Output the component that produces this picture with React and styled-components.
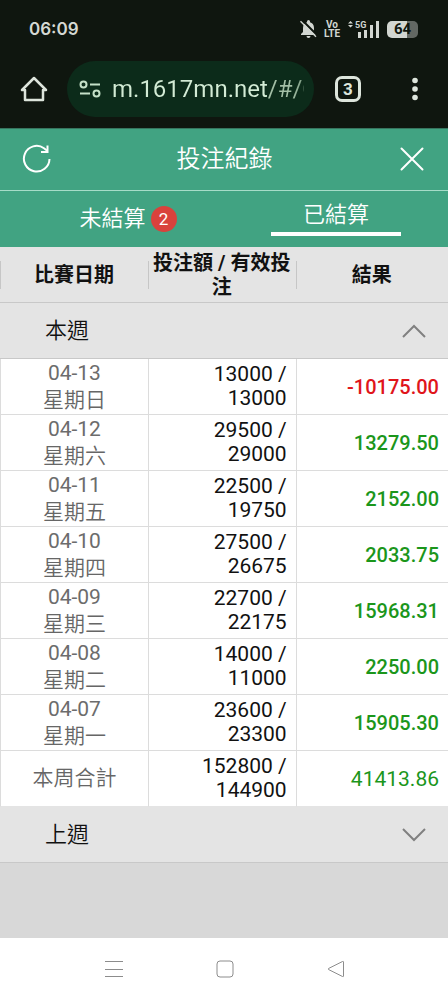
import React, { useState } from "react";
import styled, { createGlobalStyle } from "styled-components";

const GlobalStyle = createGlobalStyle`
  * {
    box-sizing: border-box;
  }
  body {
    margin: 0;
    background: #d8d8d8;
    font-family: Roboto, "Noto Sans CJK TC", sans-serif;
    color: #111;
  }
  button {
    border: none;
    background: none;
    padding: 0;
    font: inherit;
    color: inherit;
    cursor: pointer;
  }
  svg {
    display: block;
  }
`;

const Page = styled.div`
  min-height: 100vh;
  display: flex;
  flex-direction: column;
`;

const BrowserTop = styled.div`
  background: #0f160f;
  color: #dde5dc;
`;

const StatusBar = styled.div`
  height: 58px;
  padding: 0 30px 0 29px;
  display: flex;
  align-items: center;
  justify-content: space-between;
`;

const Clock = styled.span`
  font-family: Inter, sans-serif;
  font-size: 17px;
  font-weight: 600;
  color: #d5d9d4;
`;

const StatusIcons = styled.div`
  display: flex;
  align-items: center;
  color: #d2d6d1;
`;

const Volte = styled.span`
  width: 18px;
  margin: 0 7px 0 6px;
  font-size: 10px;
  line-height: 9px;
  font-weight: 700;
  text-align: center;
`;

const Battery = styled.span`
  width: 31px;
  height: 17px;
  margin-left: 7px;
  border-radius: 5px;
  background: linear-gradient(to right, #d2d6d1 64%, #636863 64%);
  color: #0f160f;
  font-size: 15px;
  line-height: 17px;
  font-weight: 700;
  text-align: center;
`;

const AddressRow = styled.div`
  height: 70px;
  padding: 3px 22px 11px 20px;
  display: flex;
  align-items: center;
`;

const AddressBar = styled.label`
  flex: 1;
  min-width: 0;
  height: 56px;
  margin: 0 21px 0 19px;
  padding: 0 10px 0 12px;
  border-radius: 28px;
  background: #0c2b1a;
  display: flex;
  align-items: center;
  gap: 11px;
`;

const AddressInput = styled.input`
  flex: 1;
  min-width: 0;
  height: 40px;
  padding: 0;
  border: none;
  outline: none;
  font-family: Roboto, sans-serif;
  font-size: 24px;
  color: transparent;
  background: linear-gradient(to right, #d3ebd5 155px, #a3bfa6 155px 180px, #7c9a82);
  background-clip: text;
  -webkit-background-clip: text;
`;

const TabCount = styled.button`
  width: 26px;
  height: 26px;
  border: 3px solid #dde5dc;
  border-radius: 7px;
  font-size: 17px;
  line-height: 20px;
  font-weight: 700;
`;

const MoreButton = styled.button`
  width: 20px;
  margin-left: 45px;
`;

const TitleBar = styled.header`
  height: 63px;
  padding: 0 21px 2px 22px;
  background: #41a382;
  border-top: 1px solid #37755f;
  border-bottom: 1px solid #a6dcc8;
  display: flex;
  align-items: center;
  justify-content: space-between;
  color: #fff;
`;

const Title = styled.h1`
  margin: 0;
  font-size: 24px;
  line-height: 32px;
  font-weight: 350;
`;

const Tabs = styled.nav`
  height: 56px;
  padding: 0 8px 0 24px;
  background: #41a382;
  display: flex;
  color: #fff;
`;

const Tab = styled.button`
  flex: 1;
  display: flex;
  flex-direction: column;
  align-items: center;
  padding-top: ${(props) => (props.$active ? 8 : 12)}px;
  font-size: 22px;
  line-height: 32px;
  font-weight: 350;

  &::after {
    content: "";
    width: 130px;
    height: 4px;
    margin-top: 1px;
    background: ${(props) => (props.$active ? "#fff" : "transparent")};
  }
`;

const TabLabel = styled.span`
  display: flex;
  align-items: center;
  gap: 5px;
`;

const Badge = styled.span`
  width: 26px;
  height: 26px;
  border-radius: 50%;
  background: #d9423c;
  font-size: 17px;
  line-height: 26px;
  font-weight: 400;
  text-align: center;
`;

const RecordTable = styled.table`
  width: 100%;
  table-layout: fixed;
  border-collapse: separate;
  border-spacing: 0;
`;

const Column = styled.col`
  width: ${(props) => props.$width};
`;

const HeadCell = styled.th`
  height: 56px;
  padding: 0 4px;
  background: #e4e4e4 linear-gradient(#c6c6c6, #c6c6c6) left center / 1px 28px no-repeat;
  border-bottom: 1px solid #c8c8c8;
  font-size: 20px;
  line-height: 24px;
  font-weight: 700;
`;

const WeekCell = styled.th`
  padding: 0;
  background: #e4e4e4;
  border-bottom: 1px solid #c8c8c8;
`;

const WeekButton = styled.button`
  width: 100%;
  height: 55px;
  padding: 0 21px 0 45px;
  display: flex;
  align-items: center;
  justify-content: space-between;
  font-size: 22px;
  line-height: 32px;
  font-weight: 350;
`;

const Cell = styled.td`
  height: 56px;
  padding: 0;
  background: #fff;
  border-left: 1px solid #dcdcdc;
  border-bottom: 1px solid ${(props) => (props.$last ? "#e4e4e4" : "#dcdcdc")};
`;

const DateCell = styled(Cell)`
  font-size: 21px;
  line-height: 27px;
  font-weight: 350;
  text-align: center;
  color: #666;

  span {
    display: block;
    font-weight: 400;
    color: #6c6c6c;
  }
`;

const AmountCell = styled(Cell)`
  padding: 0 9px 2px 40px;
  font-size: 21px;
  line-height: 24px;
  text-align: right;
`;

const ResultCell = styled(Cell)`
  padding-right: 9px;
  font-size: ${(props) => (props.$last ? 21 : 20)}px;
  line-height: 24px;
  font-weight: ${(props) => (props.$last ? 400 : 500)};
  text-align: right;
  color: ${(props) => (props.$loss ? "#e0151b" : "#1b961b")};
`;

const SystemNav = styled.nav`
  height: 62px;
  margin-top: auto;
  padding: 0 56px 0 58px;
  background: #fff;
  display: flex;
`;

const SystemButton = styled.button`
  flex: 1;
  display: flex;
  align-items: center;
  justify-content: center;
`;

const days = [
  { date: "04-13", day: "星期日", bet: 13000, valid: 13000, result: "-10175.00" },
  { date: "04-12", day: "星期六", bet: 29500, valid: 29000, result: "13279.50" },
  { date: "04-11", day: "星期五", bet: 22500, valid: 19750, result: "2152.00" },
  { date: "04-10", day: "星期四", bet: 27500, valid: 26675, result: "2033.75" },
  { date: "04-09", day: "星期三", bet: 22700, valid: 22175, result: "15968.31" },
  { date: "04-08", day: "星期二", bet: 14000, valid: 11000, result: "2250.00" },
  { date: "04-07", day: "星期一", bet: 23600, valid: 23300, result: "15905.30" },
];

function Chevron({ up }) {
  return (
    <svg width="26" height="16" viewBox="0 0 26 16" fill="none" stroke="#808080" strokeWidth="2">
      <path d={up ? "M2 14 13 3l11 11" : "M2 2l11 11L24 2"} />
    </svg>
  );
}

function PhoneStatus() {
  return (
    <StatusBar>
      <Clock>06:09</Clock>
      <StatusIcons>
        <svg width="17" height="18" viewBox="0 0 17 18">
          <path d="M1 15v-1l2-2V8C3 4.800 4.800 2.800 7 2.300V1.500a1.500 1.500 0 0 1 3 0v.8C12.200 2.800 14 4.800 14 8v4l2 2v1zM6.500 16h4a2 2 0 0 1-4 0z" fill="currentColor" />
          <path d="M2 0 17.500 15.500" stroke="#0f160f" strokeWidth="2" />
          <path d="M.5 1.200 16 16.700" stroke="currentColor" strokeWidth="1.500" />
        </svg>
        <Volte>
          Vo
          <br />
          LTE
        </Volte>
        <svg width="32" height="18" viewBox="0 0 32 18" fill="currentColor">
          <path d="M0 3.500 2.500 1 5 3.500zM0 5h5L2.500 7.500z" />
          <text x="7" y="8" fontSize="9" fontWeight="700" fontFamily="Roboto, sans-serif">
            5G
          </text>
          <path d="M10 12h3v6h-3zM16 10h3v8h-3zM22 5h3v13h-3zM28 1h3v17h-3z" />
        </svg>
        <Battery>64</Battery>
      </StatusIcons>
    </StatusBar>
  );
}

function BrowserBar() {
  return (
    <AddressRow>
      <button aria-label="Home">
        <svg width="28" height="28" viewBox="0 0 28 28" fill="none" stroke="currentColor" strokeWidth="2.500" strokeLinejoin="round">
          <path d="M2 15h3v10h18V15h3L14 3z" />
        </svg>
      </button>
      <AddressBar>
        <svg width="22" height="18" viewBox="0 0 22 18" fill="none" stroke="#c5e0c8" strokeWidth="2">
          <circle cx="4.500" cy="4.500" r="3" />
          <path d="M11 4.500h10M1 13.500h10" />
          <circle cx="17.500" cy="13.500" r="3" />
        </svg>
        <AddressInput aria-label="Address" defaultValue="m.1617mn.net/#/C" />
      </AddressBar>
      <TabCount aria-label="Open tabs">3</TabCount>
      <MoreButton aria-label="More">
        <svg width="20" height="26" viewBox="0 0 20 26" fill="currentColor">
          <circle cx="9" cy="4.500" r="2.800" />
          <circle cx="9" cy="13" r="2.800" />
          <circle cx="9" cy="21.500" r="2.800" />
        </svg>
      </MoreButton>
    </AddressRow>
  );
}

export default function App() {
  const [tab, setTab] = useState("settled");
  const [open, setOpen] = useState(true);

  return (
    <Page>
      <GlobalStyle />
      <BrowserTop>
        <PhoneStatus />
        <BrowserBar />
      </BrowserTop>
      <TitleBar>
        <button aria-label="Refresh">
          <svg width="30" height="30" viewBox="0 0 30 30" fill="none" stroke="currentColor" strokeWidth="2">
            <path d="M27.500 15A12.800 12.800 0 1 1 22 4.200L25.500 7" />
            <path d="M25.500 1.500v6.500H19" />
          </svg>
        </button>
        <Title>投注紀錄</Title>
        <button aria-label="Close">
          <svg width="30" height="30" viewBox="0 0 30 30" fill="none" stroke="currentColor" strokeWidth="2" strokeLinecap="round">
            <path d="M4.500 4.500l21 21M25.500 4.500l-21 21" />
          </svg>
        </button>
      </TitleBar>
      <Tabs>
        <Tab $active={tab === "open"} onClick={() => setTab("open")}>
          <TabLabel>
            未結算 <Badge>2</Badge>
          </TabLabel>
        </Tab>
        <Tab $active={tab === "settled"} onClick={() => setTab("settled")}>
          <TabLabel>已結算</TabLabel>
        </Tab>
      </Tabs>
      <RecordTable>
        <colgroup>
          <Column $width="33%" />
          <Column $width="33%" />
          <Column $width="34%" />
        </colgroup>
        <thead>
          <tr>
            <HeadCell>比賽日期</HeadCell>
            <HeadCell>投注額 / 有效投注</HeadCell>
            <HeadCell>結果</HeadCell>
          </tr>
        </thead>
        <tbody>
          <tr>
            <WeekCell colSpan={3}>
              <WeekButton aria-expanded={open} onClick={() => setOpen(!open)}>
                本週
                <Chevron up={open} />
              </WeekButton>
            </WeekCell>
          </tr>
          {open &&
            days.map((row) => (
              <tr key={row.date}>
                <DateCell>
                  <span>{row.date}</span>
                  {row.day}
                </DateCell>
                <AmountCell>
                  {row.bet} / {row.valid}
                </AmountCell>
                <ResultCell $loss={row.result.startsWith("-")}>{row.result}</ResultCell>
              </tr>
            ))}
          {open && (
            <tr>
              <DateCell $last>本周合計</DateCell>
              <AmountCell $last>152800 / 144900</AmountCell>
              <ResultCell $last>41413.86</ResultCell>
            </tr>
          )}
          <tr>
            <WeekCell colSpan={3}>
              <WeekButton aria-expanded={false}>
                上週
                <Chevron />
              </WeekButton>
            </WeekCell>
          </tr>
        </tbody>
      </RecordTable>
      <SystemNav>
        <SystemButton aria-label="Recent apps">
          <svg width="18" height="18" viewBox="0 0 18 18" stroke="#8c8c8c">
            <path d="M0 1.500h18M0 9.500h18M0 16.500h18" />
          </svg>
        </SystemButton>
        <SystemButton aria-label="Home screen">
          <svg width="18" height="18" viewBox="0 0 18 18" fill="none" stroke="#8c8c8c">
            <rect x="1" y="1" width="16" height="16" rx="3" />
          </svg>
        </SystemButton>
        <SystemButton aria-label="Back">
          <svg width="18" height="18" viewBox="0 0 18 18" fill="none" stroke="#8c8c8c" strokeLinejoin="round">
            <path d="M16.500 2v14q0 1-1 .5l-14-7q-.8-.5 0-1l14-7q1-.5 1 .5z" />
          </svg>
        </SystemButton>
      </SystemNav>
    </Page>
  );
}
